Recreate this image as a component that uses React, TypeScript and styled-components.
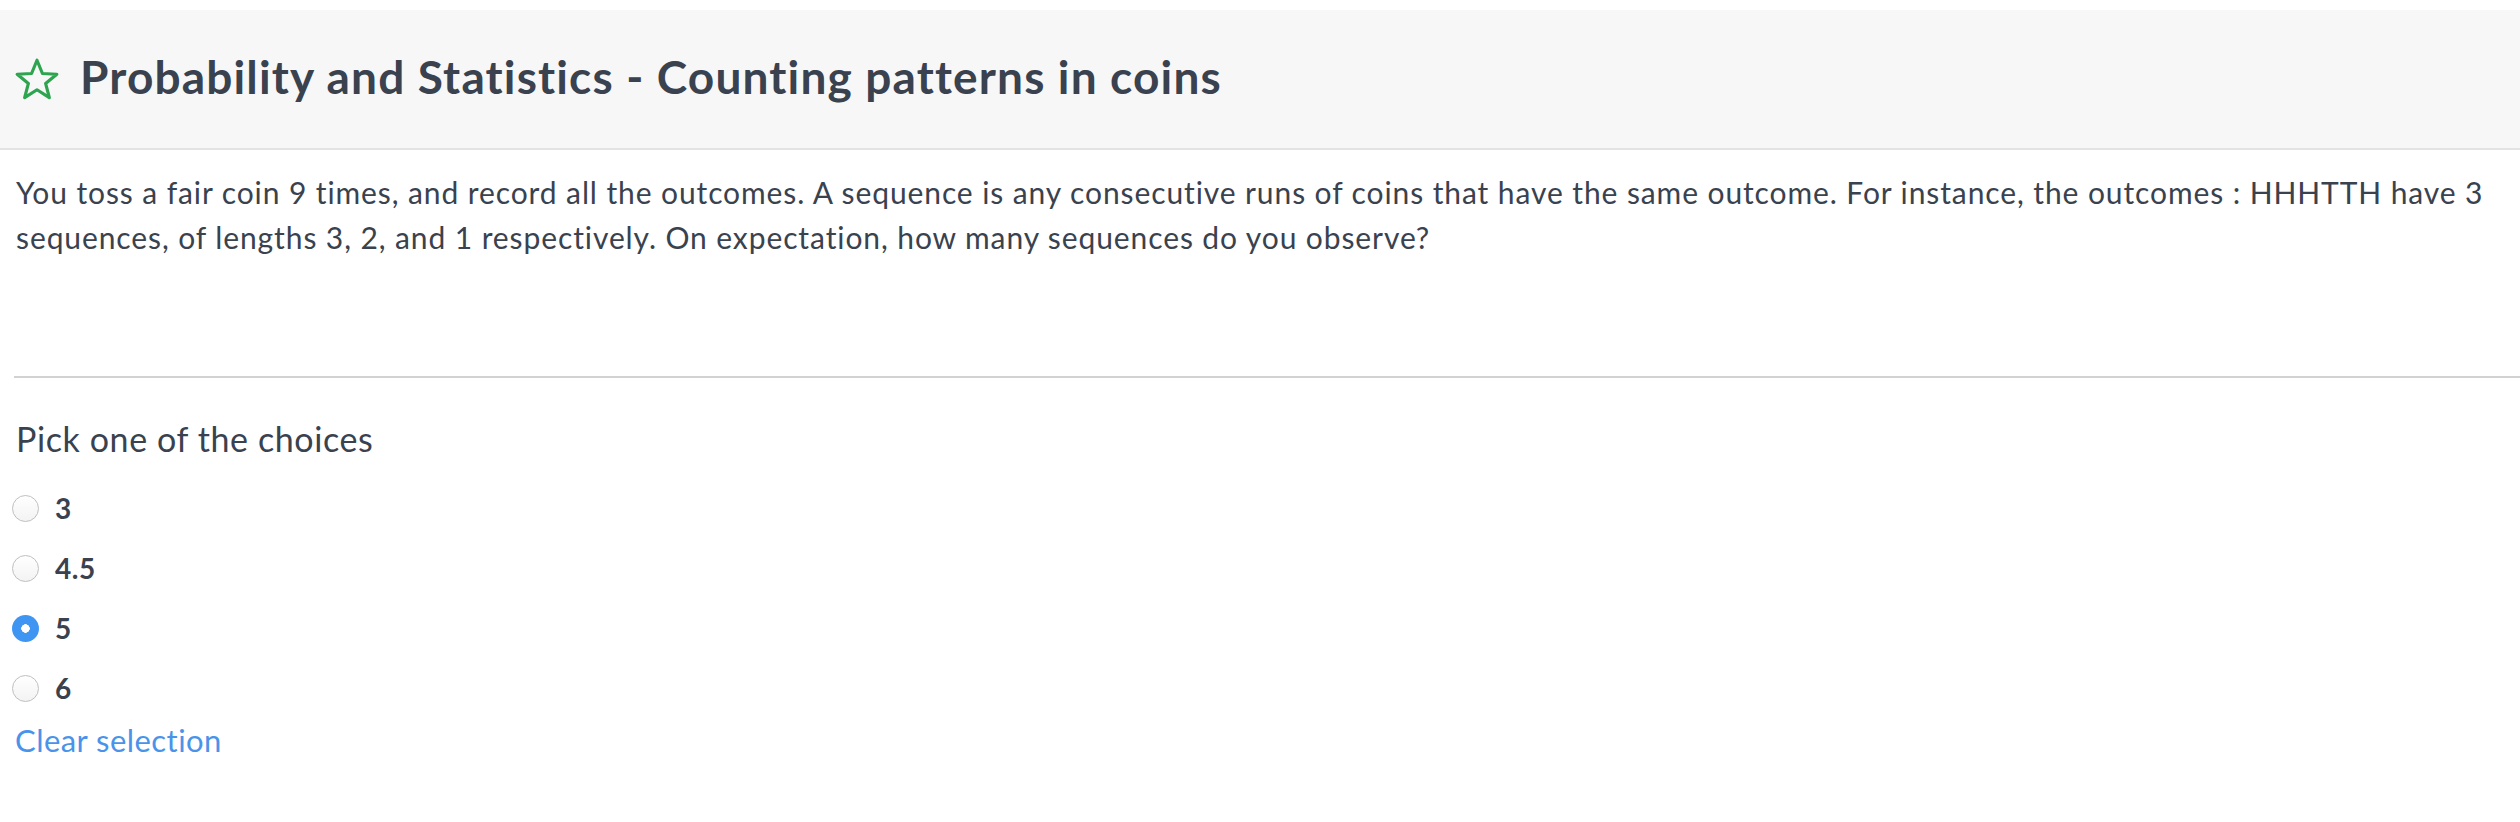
import styled, { createGlobalStyle } from "styled-components";
import { useState } from "react";

const GlobalStyle = createGlobalStyle`
  body {
    margin: 0;
    background: #ffffff;
    font-family: "Lato", "Noto Sans", sans-serif;
    color: #39424e;
  }
`;

const Page = styled.div`
  padding-top: 10px;
`;

const Header = styled.div`
  display: flex;
  align-items: center;
  gap: 20px;
  height: 138px;
  padding-left: 14px;
  background: #f7f7f7;
  border-bottom: 2px solid #e3e3e3;
`;

const Title = styled.h1`
  margin: 0 0 6px;
  font-size: 46px;
  font-weight: 700;
  letter-spacing: 1.15px;
  color: #39424e;
`;

const Body = styled.div`
  padding-left: 14px;
`;

const Question = styled.p`
  margin: 0;
  padding: 20px 0 116px 2px;
  font-size: 30px;
  line-height: 45px;
  letter-spacing: 0.9px;
  color: #39424e;
`;

const Divider = styled.hr`
  margin: 0;
  border: none;
  border-top: 2px solid #d2d2d2;
`;

const Prompt = styled.div`
  margin-top: 41px;
  padding-left: 2px;
  font-size: 34px;
  line-height: 40px;
  letter-spacing: 0.6px;
  color: #39424e;
`;

const Choices = styled.div`
  margin-top: 19px;
  margin-left: -2px;
  display: flex;
  flex-direction: column;
`;

const Choice = styled.label`
  display: flex;
  align-items: center;
  gap: 16px;
  height: 60px;
  font-size: 28px;
  font-weight: 700;
  letter-spacing: 0.5px;
  color: #39424e;
  cursor: pointer;
`;

const Radio = styled.input`
  appearance: none;
  margin: 0;
  width: 27px;
  height: 27px;
  border-radius: 50%;
  border: 1px solid #bfbfbf;
  background: linear-gradient(#ffffff, #f3f3f3);
  box-sizing: border-box;
  cursor: pointer;

  &:checked {
    border: none;
    background: radial-gradient(circle, #ffffff 0 4px, #3f95f2 4.5px);
  }
`;

const ClearLink = styled.a`
  display: inline-block;
  margin-top: 3px;
  padding-left: 1px;
  font-size: 31px;
  line-height: 38px;
  letter-spacing: 0.45px;
  color: #4a93ea;
  cursor: pointer;
`;

function Star() {
  return (
    <svg width="46" height="43" viewBox="0 0 24 23" fill="none">
      <polygon
        points="12,1.2 14.9,8.3 22.6,8.7 16.6,13.6 18.6,21.2 12,17 5.4,21.2 7.4,13.6 1.4,8.7 9.1,8.3"
        stroke="#2ea44f"
        strokeWidth="1.7"
        strokeLinejoin="round"
      />
    </svg>
  );
}

const options = ["3", "4.5", "5", "6"];

export default function App() {
  const [picked, setPicked] = useState<string | null>("5");

  return (
    <Page>
      <GlobalStyle />
      <Header>
        <Star />
        <Title>Probability and Statistics - Counting patterns in coins</Title>
      </Header>
      <Body>
        <Question>
          You toss a fair coin 9 times, and record all the outcomes. A sequence
          is any consecutive runs of coins that have the same outcome. For
          instance, the outcomes : HHHTTH have 3 sequences, of lengths 3, 2, and
          1 respectively. On expectation, how many sequences do you observe?
        </Question>
        <Divider />
        <Prompt>Pick one of the choices</Prompt>
        <Choices>
          {options.map((o) => (
            <Choice key={o}>
              <Radio
                type="radio"
                name="choice"
                checked={picked === o}
                onChange={() => setPicked(o)}
              />
              {o}
            </Choice>
          ))}
        </Choices>
        <ClearLink onClick={() => setPicked(null)}>Clear selection</ClearLink>
      </Body>
    </Page>
  );
}
